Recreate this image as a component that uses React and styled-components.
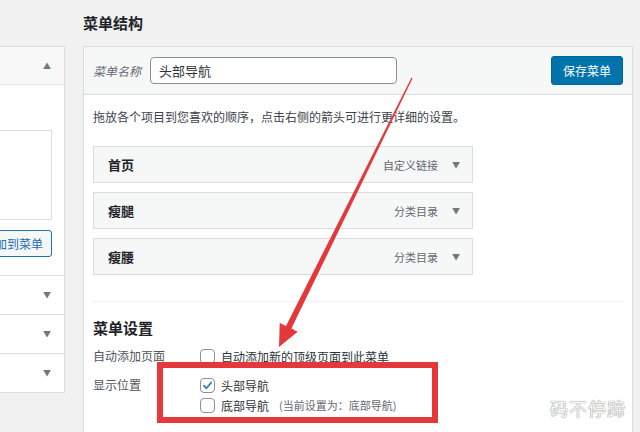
import React from "react";
import styled, { createGlobalStyle } from "styled-components";

const GlobalStyle = createGlobalStyle`
  html, body {
    margin: 0;
    padding: 0;
  }

  body {
    background: #f1f1f1;
    font-family: "Noto Sans CJK SC", "Noto Sans", sans-serif;
    color: #23282d;
  }
`;

const Page = styled.div`
  position: relative;
  width: 640px;
  height: 432px;
  overflow: hidden;
  display: flex;
  gap: 18px;
  background: #f1f1f1;
`;

/* left column: cut off by the window edge */
const Sidebar = styled.div`
  flex: none;
  width: 65px;
  padding-top: 46px;
`;

const SideBox = styled.div`
  border: 1px solid #dcdcde;
  border-left: none;
  overflow: hidden;
`;

const SideHeader = styled.div`
  height: 37px;
  display: flex;
  align-items: center;
  justify-content: flex-end;
  padding-right: 13px;
  background: #f8f8f8;
  border-bottom: 1px solid #e2e4e7;
`;

const Caret = styled.span`
  font-size: 8px;
  line-height: 1;
  color: #72777c;
`;

const SideBody = styled.div`
  display: flex;
  flex-direction: column;
  align-items: flex-end;
  padding: 45px 12px 18px 0;
  background: #fff;
`;

const ListBox = styled.div`
  width: 80px;
  height: 90px;
  border: 1px solid #dcdcde;
  box-sizing: border-box;
`;

const AddButton = styled.button`
  margin-top: 10px;
  height: 27px;
  padding: 0 8px;
  white-space: nowrap;
  border: 1px solid #2271b1;
  border-radius: 3px;
  background: #f6f7f7;
  color: #2271b1;
  font-family: inherit;
  font-size: 12px;
`;

const SideRow = styled.div`
  height: 38px;
  display: flex;
  align-items: center;
  justify-content: flex-end;
  padding-right: 13px;
  background: #fff;
  border-top: 1px solid #dcdcde;
`;

/* right column */
const Main = styled.div`
  flex: none;
  width: 550px;
`;

const Title = styled.h2`
  margin: 0;
  padding-top: 13px;
  height: 33px;
  font-size: 15px;
  line-height: 20px;
  font-weight: 700;
  color: #1d2327;
`;

const Panel = styled.div`
  border: 1px solid #dcdcde;
  background: #fff;
`;

const PanelHeader = styled.div`
  height: 47px;
  display: flex;
  align-items: center;
  padding: 0 9px;
  background: #f6f7f7;
  border-bottom: 1px solid #dcdcde;
`;

const NameLabel = styled.label`
  font-size: 12px;
  font-style: italic;
  color: #646970;
  margin-right: 9px;
`;

const NameInput = styled.div`
  width: 247px;
  height: 27px;
  box-sizing: border-box;
  display: flex;
  align-items: center;
  padding-left: 8px;
  border: 1px solid #8c8f94;
  border-radius: 4px;
  background: #fff;
  font-size: 13px;
  color: #2c3338;
`;

const SaveButton = styled.button`
  margin-left: auto;
  width: 72px;
  height: 29px;
  border: 1px solid #006799;
  border-radius: 3px;
  background: #0073aa;
  color: #fff;
  font-family: inherit;
  font-size: 12px;
`;

const PanelBody = styled.div`
  padding: 14px 9px 60px 9px;
`;

const Hint = styled.p`
  margin: 0;
  font-size: 12px;
  line-height: 16px;
  color: #3c434a;
`;

const MenuList = styled.div`
  width: 380px;
  margin-top: 21px;
  display: flex;
  flex-direction: column;
  gap: 9px;
`;

const MenuItem = styled.div`
  height: 37px;
  box-sizing: border-box;
  display: flex;
  align-items: center;
  padding: 0 12px 0 14px;
  border: 1px solid #dcdcde;
  background: #f6f7f7;
`;

const ItemTitle = styled.span`
  font-size: 13px;
  font-weight: 600;
  color: #1d2327;
`;

const ItemType = styled.span`
  margin-left: auto;
  margin-right: 14px;
  font-size: 11px;
  color: #646970;
`;

const Divider = styled.div`
  margin-top: 26px;
  height: 1px;
  background: #f0f0f1;
`;

const SectionTitle = styled.h3`
  margin: 16px 0 0;
  font-size: 15px;
  line-height: 20px;
  font-weight: 700;
  color: #1d2327;
`;

const SettingRow = styled.div`
  display: flex;
  margin-top: ${(p) => p.gap}px;
`;

const SettingLabel = styled.div`
  width: 107px;
  flex: none;
  font-size: 12px;
  line-height: 20px;
  color: #50575e;
`;

const Options = styled.div`
  display: flex;
  flex-direction: column;
`;

const Option = styled.label`
  display: flex;
  align-items: center;
  height: 20px;
  font-size: 12px;
  color: #2c3338;
`;

const Box = styled.span`
  width: 15px;
  height: 15px;
  box-sizing: border-box;
  margin-right: 6px;
  display: flex;
  align-items: center;
  justify-content: center;
  border: 1px solid #8c8f94;
  border-radius: 4px;
  background: #fff;
`;

const Note = styled.span`
  margin-left: 10px;
  font-size: 11px;
  color: #646970;
`;

/* annotations on top of the screenshot */
const Overlay = styled.svg`
  position: absolute;
  left: 0;
  top: 0;
  pointer-events: none;
`;

const Highlight = styled.div`
  position: absolute;
  left: 157px;
  top: 362px;
  width: 281px;
  height: 61px;
  box-sizing: border-box;
  border: 6px solid #e5383b;
`;

const Watermark = styled.div`
  position: absolute;
  left: 550px;
  top: 395px;
  font-size: 18px;
  letter-spacing: 1px;
  color: rgba(255, 255, 255, 0.95);
  text-shadow: 0 0 1px #8a8a8a, 0 0 1px #8a8a8a;
`;

const Check = ({ checked }) => (
  <Box>
    {checked ? (
      <svg width="11" height="11" viewBox="0 0 12 12">
        <path
          d="M2 6.2 L4.8 9 L10 2.8"
          fill="none"
          stroke="#3582c4"
          strokeWidth="2"
          strokeLinecap="round"
          strokeLinejoin="round"
        />
      </svg>
    ) : null}
  </Box>
);

const items = [
  { title: "首页", type: "自定义链接" },
  { title: "瘦腿", type: "分类目录" },
  { title: "瘦腰", type: "分类目录" },
];

const App = () => {
  return (
    <>
      <GlobalStyle />
      <Page>
        <Sidebar>
          <SideBox>
            <SideHeader>
              <Caret>▲</Caret>
            </SideHeader>
            <SideBody>
              <ListBox />
              <AddButton>添加到菜单</AddButton>
            </SideBody>
            <SideRow>
              <Caret>▼</Caret>
            </SideRow>
            <SideRow>
              <Caret>▼</Caret>
            </SideRow>
            <SideRow>
              <Caret>▼</Caret>
            </SideRow>
          </SideBox>
        </Sidebar>

        <Main>
          <Title>菜单结构</Title>
          <Panel>
            <PanelHeader>
              <NameLabel>菜单名称</NameLabel>
              <NameInput>头部导航</NameInput>
              <SaveButton>保存菜单</SaveButton>
            </PanelHeader>
            <PanelBody>
              <Hint>拖放各个项目到您喜欢的顺序，点击右侧的箭头可进行更详细的设置。</Hint>
              <MenuList>
                {items.map((item) => (
                  <MenuItem key={item.title}>
                    <ItemTitle>{item.title}</ItemTitle>
                    <ItemType>{item.type}</ItemType>
                    <Caret>▼</Caret>
                  </MenuItem>
                ))}
              </MenuList>
              <Divider />
              <SectionTitle>菜单设置</SectionTitle>
              <SettingRow gap={8}>
                <SettingLabel>自动添加页面</SettingLabel>
                <Options>
                  <Option>
                    <Check />
                    自动添加新的顶级页面到此菜单
                  </Option>
                </Options>
              </SettingRow>
              <SettingRow gap={9}>
                <SettingLabel>显示位置</SettingLabel>
                <Options>
                  <Option>
                    <Check checked />
                    头部导航
                  </Option>
                  <Option>
                    <Check />
                    底部导航
                    <Note>(当前设置为：底部导航)</Note>
                  </Option>
                </Options>
              </SettingRow>
            </PanelBody>
          </Panel>
        </Main>

        <Highlight />
        <Overlay width="640" height="432" viewBox="0 0 640 432">
          <polygon
            points="412.6,78.3 291.4,328.6 297.7,331.7 279,347 279.7,322.9 286,326 411.4,77.7"
            fill="#e5383b"
          />
        </Overlay>
        <Watermark>码不停蹄</Watermark>
      </Page>
    </>
  );
};

export default App;
